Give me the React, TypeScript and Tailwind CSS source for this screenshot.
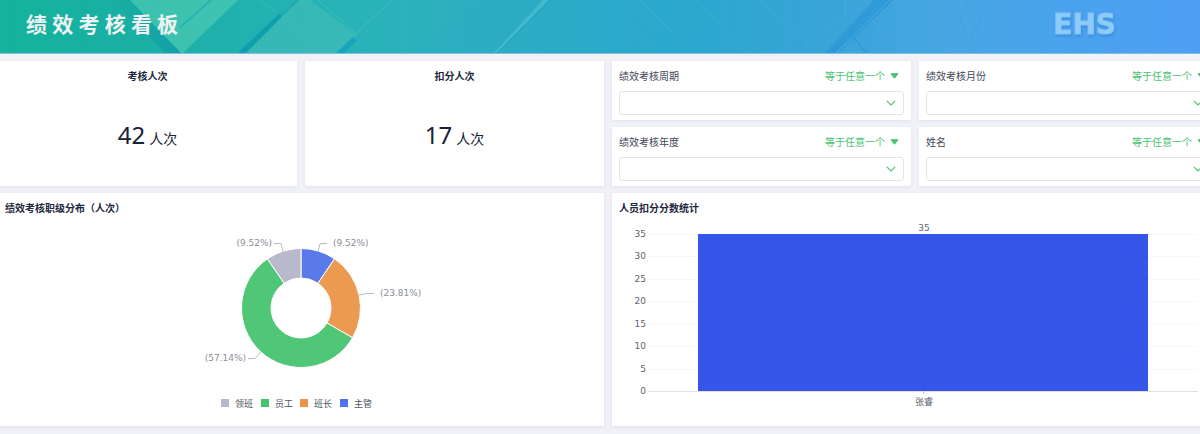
import React from "react";

const GREEN = "#4cc173";

function HeaderArt() {
  return (
    <svg
      className="absolute inset-0 h-full w-full"
      viewBox="0 0 1200 54"
      preserveAspectRatio="none"
      aria-hidden="true"
    >
      <defs>
        <linearGradient id="header-base" x1="0" y1="0" x2="1" y2="0">
          <stop offset="0" stopColor="#14b39c" />
          <stop offset="0.12" stopColor="#1aafa4" />
          <stop offset="0.3" stopColor="#29b3b9" />
          <stop offset="0.4" stopColor="#2cadc2" />
          <stop offset="0.58" stopColor="#2ba7cf" />
          <stop offset="0.7" stopColor="#3aa4d8" />
          <stop offset="0.8" stopColor="#48a6e4" />
          <stop offset="0.9" stopColor="#4aa2ee" />
          <stop offset="1" stopColor="#4e9ff4" />
        </linearGradient>
        <linearGradient id="band-shade" x1="0" y1="0" x2="1" y2="0">
          <stop offset="0" stopColor="#0f9aa6" stopOpacity="0" />
          <stop offset="1" stopColor="#0f9aa6" stopOpacity="0.75" />
        </linearGradient>
      </defs>
      <rect width="1200" height="54" fill="url(#header-base)" />
      <path d="M109 0L122 9L165 54H181L130 0Z" fill="url(#band-shade)" />
      <path d="M130 0H238L183 54H181Z" fill="#4dcab4" fillOpacity="0.7" />
      <path d="M152 0L180 28" stroke="#35bfae" strokeWidth="1" fill="none" />
      <path d="M180 28L211 0" stroke="#1fb0b8" strokeWidth="1.5" fill="none" />
      <path d="M260 0L282 17" stroke="#45c4bf" strokeOpacity="0.5" fill="none" />
      <path d="M238 54L280 13L282 17L246 54Z" fill="#0f9db0" />
      <path d="M282 17L299 0H310L357 36L338 54H246Z" fill="#45bdb9" fillOpacity="0.6" />
      <path d="M282 17L320 54" stroke="#4fc3c0" strokeOpacity="0.35" fill="none" />
      <path d="M282 15L298 0" stroke="#169fb3" strokeOpacity="0.5" strokeWidth="2" fill="none" />
      <path d="M318 0L356 34L392 0" stroke="#5fcbc9" strokeOpacity="0.45" fill="none" />
      <path d="M336 54L353 38L357 41L344 54Z" fill="#17a3b9" />
      <path d="M400 0H474L418 54H400Z" fill="#38b9b6" fillOpacity="0.15" />
      <path d="M494 54L543 0H549L497 54Z" fill="#4abdd0" fillOpacity="0.8" />
      <path d="M497 54L550 0" stroke="#1d9fc0" strokeWidth="1" fill="none" />
      <path d="M640 0L674 35" stroke="#5cc0dc" strokeOpacity="0.45" fill="none" />
      <path d="M600 0L652 48M633 4L664 34" stroke="#5cc0dc" strokeOpacity="0.2" fill="none" />
      <path d="M697 0L747 54M760 0L800 38" stroke="#63bfe2" strokeOpacity="0.25" fill="none" />
      <path d="M825 54L874 0H893L836 54Z" fill="#2795d6" fillOpacity="0.6" />
      <path d="M838 54L892 0" stroke="#2a93d8" strokeWidth="1" fill="none" />
      <path d="M836 54L890 0" stroke="#4aaee4" strokeWidth="1" fill="none" />
      <path d="M853 38L867 54" stroke="#3299dc" strokeWidth="1.5" fill="none" />
      <path d="M845 20V0M872 20L902 54M806 46L836 18" stroke="#7ac8ee" strokeOpacity="0.2" fill="none" />
      <path d="M968 54L1022 0" stroke="#3597df" strokeOpacity="0.4" fill="none" />
      <g fill="#3093da" fillOpacity="0.5">
        <circle cx="968" cy="7" r="1.2" />
        <circle cx="962" cy="12" r="1" />
        <circle cx="961" cy="18" r="1" />
        <circle cx="960" cy="22" r="1" />
        <circle cx="958" cy="26" r="1" />
        <circle cx="964" cy="25" r="1" />
        <circle cx="973" cy="15" r="1" />
        <circle cx="980" cy="18" r="1" />
        <circle cx="978" cy="25" r="1" />
        <circle cx="976" cy="29" r="1.2" />
        <circle cx="972" cy="34" r="1" />
      </g>
    </svg>
  );
}

function Header() {
  return (
    <header className="relative flex h-[54px] items-center justify-between border-b border-[#7fc0e0] pr-[84px] pl-[26px]">
      <HeaderArt />
      <h1 className="relative pb-1 font-[Roboto,'Noto_Sans_CJK_SC',sans-serif] text-[21px] leading-7 font-bold text-[#eef2f3]">
        绩 效 考 核 看 板
      </h1>
      <span className="relative pb-1 font-['DejaVu_Sans',sans-serif] text-[28px] leading-8 font-bold text-[#8ecbf9] drop-shadow-[1px_2px_1px_#3a8fdc] [-webkit-text-stroke:1px_#84c3f8]">
        EHS
      </span>
    </header>
  );
}

function Card({ className = "", children }: { className?: string; children: React.ReactNode }) {
  return (
    <section className={`bg-white shadow-[0_1px_4px_rgba(30,30,90,0.08)] ${className}`}>{children}</section>
  );
}

function MetricCard({ title, value, unit }: { title: string; value: number; unit: string }) {
  return (
    <Card className="flex flex-col items-center pt-[7px]">
      <h2 className="text-[10px] leading-4 font-bold text-[#1d2740]">{title}</h2>
      <p className="flex flex-1 items-baseline gap-1 pt-[35px] text-[#16213a]">
        <span className="font-['Noto_Sans',sans-serif] text-[24px] leading-8 font-normal">{value}</span>
        <span className="text-[14px] leading-8">{unit}</span>
      </p>
    </Card>
  );
}

function FilterCard({ id, label }: { id: string; label: string }) {
  return (
    <Card className="px-[7px] pt-[7px] pb-[5px]">
      <div className="flex h-4 items-center justify-between pr-[5px]">
        <label htmlFor={id} className="text-[10px] leading-4 text-[#3f4656]">
          {label}
        </label>
        <button type="button" className="flex items-center gap-[5px] text-[10px] leading-4 text-[#4cc173]">
          等于任意一个
          <svg width="9" height="6" viewBox="0 0 9 6" aria-hidden="true">
            <path d="M1 0.7H8L4.5 5.3Z" fill={GREEN} stroke={GREEN} strokeLinejoin="round" />
          </svg>
        </button>
      </div>
      <div className="relative mt-[7px]">
        <select
          id={id}
          defaultValue=""
          className="block h-6 w-full appearance-none rounded-[3px] border border-[#e3e4e6] bg-white px-2 text-[10px] text-[#3f4656] outline-none"
        >
          <option value=""></option>
        </select>
        <svg
          className="pointer-events-none absolute top-[9px] right-2"
          width="10"
          height="6"
          viewBox="0 0 10 6"
          aria-hidden="true"
        >
          <path d="M0.8 0.8L5 5L9.2 0.8" fill="none" stroke={GREEN} strokeWidth="1.1" />
        </svg>
      </div>
    </Card>
  );
}

const CX = 303;
const CY = 85;

function arc(from: number, to: number, outer: number, inner: number) {
  const point = (share: number, r: number) => {
    const a = share * 2 * Math.PI;
    return `${(CX + r * Math.sin(a)).toFixed(2)} ${(CY - r * Math.cos(a)).toFixed(2)}`;
  };
  const large = to - from > 0.5 ? 1 : 0;
  return `M${point(from, outer)}A${outer} ${outer} 0 ${large} 1 ${point(to, outer)}L${point(to, inner)}A${inner} ${inner} 0 ${large} 0 ${point(from, inner)}Z`;
}

const SLICES = [
  { name: "主管", count: 4, color: "#5a7aec", leader: "320,29 322,20.5 329,20.5", x: 335, y: 23, anchor: "start" },
  { name: "班长", count: 10, color: "#ec9951", leader: "361,72 369,70.5 376,70.5", x: 382, y: 73, anchor: "start" },
  { name: "员工", count: 24, color: "#50c677", leader: "263,129 257,135.5 250,135.5", x: 248, y: 138, anchor: "end" },
  { name: "领班", count: 4, color: "#b8bacb", leader: "285,29 283,20.5 276,20.5", x: 274, y: 23, anchor: "end" },
] as const;

const LEGEND = [
  { name: "领班", color: "#b8bacb" },
  { name: "员工", color: "#46c26d" },
  { name: "班长", color: "#ea9449" },
  { name: "主管", color: "#5072ea" },
];

function DonutChart() {
  const total = SLICES.reduce((sum, s) => sum + s.count, 0);
  let running = 0;
  return (
    <svg className="block w-full" viewBox="0 0 606 203" role="img" aria-label="绩效考核职级分布">
      {SLICES.map((s) => {
        const from = running / total;
        running += s.count;
        return (
          <g key={s.name}>
            <path d={arc(from, running / total, 59.5, 30)} fill={s.color} stroke="#fff" strokeWidth="1" />
            <polyline points={s.leader} fill="none" stroke="#b9bbc2" strokeWidth="1" />
            <text
              x={s.x}
              y={s.y}
              textAnchor={s.anchor}
              className="fill-[#8b8e98] font-['DejaVu_Sans',sans-serif] text-[9px]"
            >
              {`(${((s.count / total) * 100).toFixed(2)}%)`}
            </text>
          </g>
        );
      })}
      {LEGEND.map((l, i) => (
        <g key={l.name}>
          <rect x={223 + i * 40 - (i > 1 ? 1 : 0)} y="176" width="8" height="8" fill={l.color} />
          <text x={237 + i * 40 - (i > 1 ? 1 : 0)} y="184" className="fill-[#50545e] text-[9px]">
            {l.name}
          </text>
        </g>
      ))}
    </svg>
  );
}

function BarChart() {
  const ticks = [35, 30, 25, 20, 15, 10, 5, 0];
  const yOf = (v: number) => 168 - (v / 35) * 157;
  return (
    <svg className="block w-full" viewBox="0 0 606 203" role="img" aria-label="人员扣分分数统计">
      {ticks.map((t) => (
        <g key={t}>
          <line
            x1="36"
            x2="586"
            y1={Math.round(yOf(t)) + 0.5}
            y2={Math.round(yOf(t)) + 0.5}
            stroke={t === 0 ? "#dfe0e4" : "#f5f5f7"}
            strokeDasharray={t === 0 ? undefined : "3 1"}
          />
          <text
            x="34"
            y={Math.round(yOf(t)) + 3}
            textAnchor="end"
            className="fill-[#5d6370] font-['DejaVu_Sans',sans-serif] text-[9px]"
          >
            {t}
          </text>
        </g>
      ))}
      <rect x="86" y={yOf(35)} width="450" height="157" fill="#3556e8" />
      <text x="312" y="8" textAnchor="middle" className="fill-[#5d6370] font-['DejaVu_Sans',sans-serif] text-[9px]">
        35
      </text>
      <line x1="311.5" x2="311.5" y1="168" y2="171" stroke="#c4c6cc" />
      <text x="312" y="182" textAnchor="middle" className="fill-[#5d6370] text-[9px]">
        张睿
      </text>
    </svg>
  );
}

function ChartCard({ title, children }: { title: string; children: React.ReactNode }) {
  return (
    <Card className="col-span-2">
      <h2 className="px-[7px] pt-[7px] pb-[7px] text-[10px] leading-4 font-bold text-[#1d2740]">{title}</h2>
      {children}
    </Card>
  );
}

export default function App() {
  return (
    <div className="min-h-screen overflow-hidden bg-[#f1f2f8] font-['Noto_Sans_CJK_SC',sans-serif]">
      <Header />
      <main className="-mr-[18px] -ml-[2px] grid grid-cols-4 gap-x-2 gap-y-[7px] pt-[7px] pb-2">
        <MetricCard title="考核人次" value={42} unit="人次" />
        <MetricCard title="扣分人次" value={17} unit="人次" />
        <div className="col-span-2 grid grid-cols-2 gap-x-2 gap-y-[7px]">
          <FilterCard id="period" label="绩效考核周期" />
          <FilterCard id="month" label="绩效考核月份" />
          <FilterCard id="year" label="绩效考核年度" />
          <FilterCard id="name" label="姓名" />
        </div>
        <ChartCard title="绩效考核职级分布（人次）">
          <DonutChart />
        </ChartCard>
        <ChartCard title="人员扣分分数统计">
          <BarChart />
        </ChartCard>
      </main>
    </div>
  );
}
